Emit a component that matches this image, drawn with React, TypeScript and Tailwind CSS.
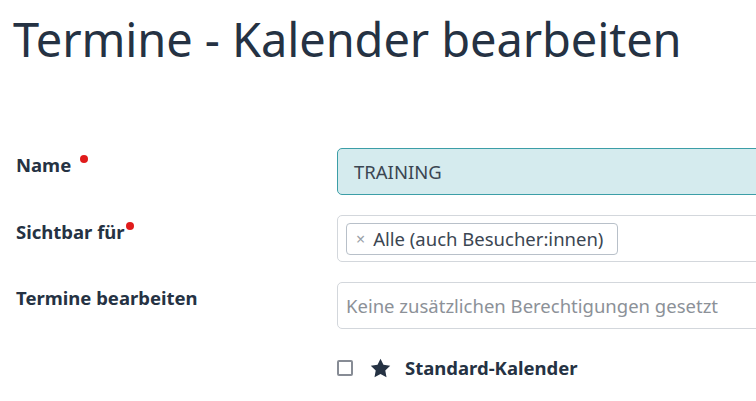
import React from "react";

export default function App() {
  return (
    <div className="w-[756px] h-[401px] overflow-hidden bg-white text-[#253243]" style={{ fontFamily: '"Noto Sans", sans-serif' }}>
      <div className="pl-4 pt-[9px]">
        <h1 className="text-[47px] leading-[60px] font-normal tracking-[-0.1px] -ml-[3px]">Termine - Kalender bearbeiten</h1>
      </div>
      <div className="mt-[79px] pl-4 grid grid-cols-[321px_520px] gap-y-5">
        <div className="pt-[2px] text-[18.5px] font-bold leading-[30px] flex items-start">
          <span>Name</span>
          <span className="ml-[9px] mt-[5px] w-2 h-2 rounded-full bg-[#e01b1b]"></span>
        </div>
        <div className="h-[47px] rounded-[5px] border border-[#3c9ea7] bg-[#d5ebee] flex items-center px-4 text-[18.5px] text-[#3b4652]">
          TRAINING
        </div>

        <div className="pt-[2px] text-[18.5px] font-bold leading-[30px] flex items-start">
          <span>Sichtbar für</span>
          <span className="ml-[1px] mt-[5px] w-2 h-2 rounded-full bg-[#e01b1b]"></span>
        </div>
        <div className="h-[47px] rounded-[5px] border border-[#d3d7dc] bg-white flex items-center px-2">
          <div className="h-[32px] rounded-[4px] border border-[#b8c0c9] flex items-center pl-[9px] pr-[14px] text-[18.5px] text-[#3b4652]">
            <span className="text-[#9aa1a8] text-[16px] mr-[8px]">×</span>
            <span>Alle (auch Besucher:innen)</span>
          </div>
        </div>

        <div className="pt-[1px] text-[18.5px] font-bold leading-[30px]">Termine bearbeiten</div>
        <div className="h-[47px] rounded-[5px] border border-[#d3d7dc] bg-white flex items-center px-2 text-[18.5px] text-[#8c9198]">
          Keine zusätzlichen Berechtigungen gesetzt
        </div>

        <div></div>
        <div className="flex items-center h-[30px] mt-[4px]">
          <span className="w-[16px] h-[16px] border-2 border-[#878c95] rounded-[2px] bg-white"></span>
          <svg className="ml-[17px]" width="21" height="20" viewBox="0 0 24 23">
            <path d="M12 0.8l3.4 7.1 7.8 1-5.7 5.4 1.4 7.7L12 18.3 5.1 22l1.4-7.7L0.8 8.9l7.8-1z" fill="#253243" />
          </svg>
          <span className="ml-[14px] text-[18.5px] font-bold">Standard-Kalender</span>
        </div>
      </div>
    </div>
  );
}
